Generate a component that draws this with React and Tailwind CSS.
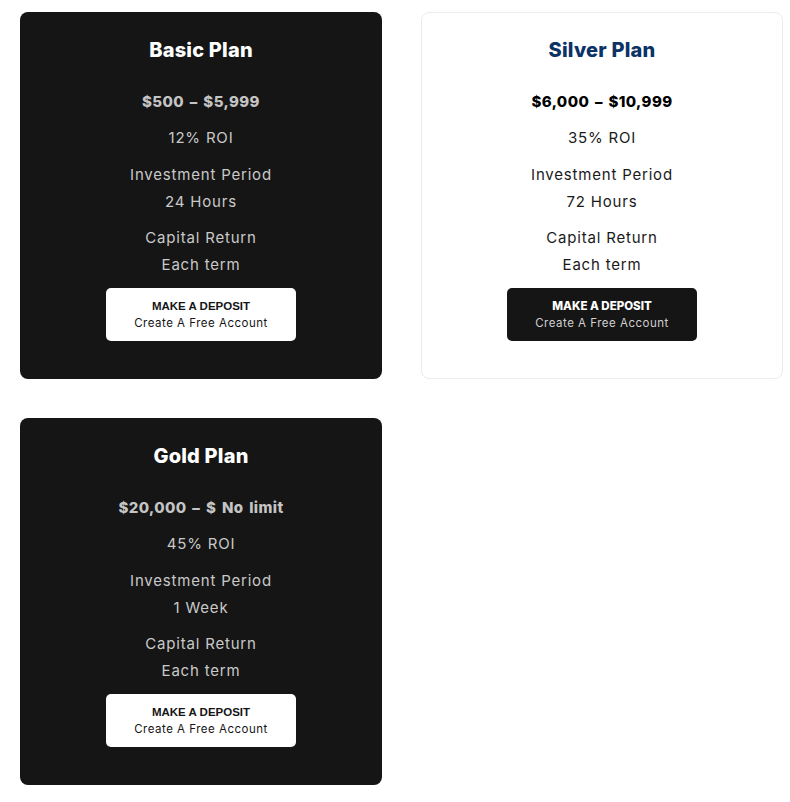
const plans = [
    { name: 'Basic Plan', range: '$500 – $5,999', roi: '12% ROI', period: '24 Hours', dark: true },
    { name: 'Silver Plan', range: '$6,000 – $10,999', roi: '35% ROI', period: '72 Hours', dark: false },
    { name: 'Gold Plan', range: '$20,000 – $ No limit', roi: '45% ROI', period: '1 Week', dark: true },
];

function PlanCard({ plan }) {
    const { dark } = plan;
    return (
        <div
            className={
                dark
                    ? 'flex h-[367px] flex-col items-center rounded-lg bg-[#151515] pt-[25px] text-[#c9c9c9]'
                    : 'flex h-[367px] flex-col items-center rounded-lg border border-[#ececec] bg-white pt-6 text-[#1a1a1a]'
            }
        >
            <h3 className={dark ? 'text-[20px] font-extrabold leading-[27px] tracking-[0.2px] text-white' : 'text-[20px] font-extrabold leading-[27px] tracking-[0.2px] text-[#0b3366]'}>
                {plan.name}
            </h3>
            <p className={dark ? 'mt-6 text-[15px] font-extrabold leading-[27px] tracking-[0.4px] [word-spacing:2px] text-[#c4c4c4]' : 'mt-6 text-[15px] font-extrabold leading-[27px] tracking-[0.4px] [word-spacing:2px] text-black'}>
                {plan.range}
            </p>
            <p className="mt-[9px] text-[15px] leading-[27px] tracking-[0.8px]">{plan.roi}</p>
            <p className="mt-[10px] text-[15px] leading-[27px] tracking-[0.8px]">Investment Period</p>
            <p className="text-[15px] leading-[27px] tracking-[0.8px]">{plan.period}</p>
            <p className="mt-[9px] text-[15px] leading-[27px] tracking-[0.8px]">Capital Return</p>
            <p className="text-[15px] leading-[27px] tracking-[0.8px]">Each term</p>
            <a
                href="#"
                className={
                    dark
                        ? 'mt-[10px] flex h-[53px] w-[190px] flex-col items-center justify-center rounded-[5px] bg-white text-[#151515]'
                        : 'mt-[10px] flex h-[53px] w-[190px] flex-col items-center justify-center rounded-[5px] bg-[#151515] text-[#d0d0d0]'
                }
            >
                <span className={dark ? "font-['Liberation_Sans',sans-serif] text-[11.5px] font-bold leading-[17px]" : 'text-[11.5px] font-extrabold leading-[17px] text-white'}>
                    MAKE A DEPOSIT
                </span>
                <span className="text-[11.5px] leading-[17px] tracking-[0.5px]">Create A Free Account</span>
            </a>
        </div>
    );
}

export default function App() {
    return (
        <div className="min-h-screen bg-white pl-5 pt-3 font-['Inter',sans-serif]">
            <div className="grid w-[763px] grid-cols-2 gap-x-[39px] gap-y-[39px]">
                {plans.map(plan => (
                    <PlanCard key={plan.name} plan={plan} />
                ))}
            </div>
        </div>
    );
}
